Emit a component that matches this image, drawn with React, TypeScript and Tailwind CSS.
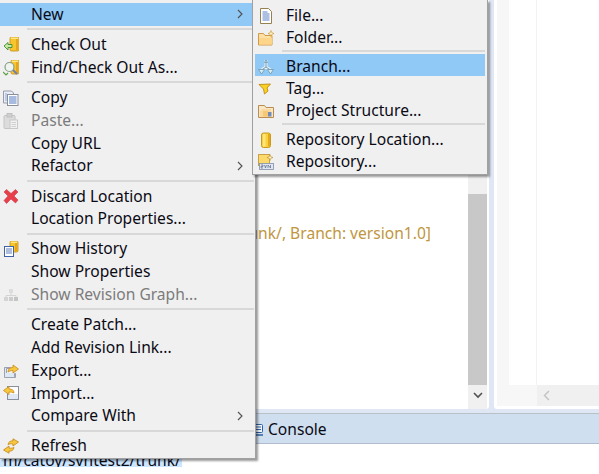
import type { ReactNode } from "react";

function Svg({ children }: { children: ReactNode }) {
  return (
    <svg width="16" height="16" viewBox="0 0 16 16" className="block">
      {children}
    </svg>
  );
}

const Cyl = ({ x = 7, w = 7, y = 1, h = 13 }: { x?: number; w?: number; y?: number; h?: number }) => (
  <>
    <rect x={x} y={y} width={w} height={h} rx="1.5" fill="#f7c62f" stroke="#c48a10" strokeWidth="0.8" />
    <rect x={x + w - 3} y={y + 1} width="2" height={h - 2} fill="#e6a51c" />
    <rect x={x + 0.8} y={y + 0.6} width={w - 1.6} height="1.4" fill="#ffe88a" />
  </>
);

const icons: Record<string, ReactNode> = {
  checkout: (
    <Svg>
      <Cyl x={7} w={9} y={0} h={14} />
      <path d="M1 9 5 5.500v2h4v3H5V13z" fill="#c8e8a8" stroke="#3f8f2c" strokeWidth="0.9" />
    </Svg>
  ),
  find: (
    <Svg>
      <Cyl x={8} w={8} y={0} h={14} />
      <circle cx="6.500" cy="7" r="4.500" fill="#eef4ee" stroke="#8a9a8a" strokeWidth="1.200" />
      <path d="m10 10 4 4" stroke="#6f7fb0" strokeWidth="2" />
      <path d="m0 12 3 3 2-2" stroke="#58a040" strokeWidth="1.200" fill="none" />
    </Svg>
  ),
  copy: (
    <Svg>
      <path d="M.5 1h8l2 2v10H.5z" fill="#e8eef8" stroke="#9a9aa8" />
      <rect x="4.500" y="4.500" width="10.500" height="11" fill="#fff" stroke="#8a8f9e" />
      <path d="M6 7h7.500M6 9h7.500M6 11h7.500M6 13h7.500" stroke="#4f78c0" />
      <path d="M2 4h2M2 6h2M2 8h2M2 10h2" stroke="#8fa8d8" />
    </Svg>
  ),
  paste: (
    <Svg>
      <rect x="1" y="2.500" width="11" height="13" rx="1" fill="#dcdcdc" stroke="#c4c4c4" />
      <rect x="4" y="0.500" width="5" height="3.500" fill="#cfcfcf" stroke="#c0c0c0" />
      <rect x="7" y="7" width="7.500" height="8.500" fill="#f2f2f2" stroke="#c8c8c8" />
      <path d="M8.500 9.500h4.500M8.500 11.500h4.500M8.500 13.500h4.500" stroke="#d0d0d0" />
    </Svg>
  ),
  discard: (
    <Svg>
      <path d="M3.500 1.500 8 5.500l4.500-4 2.500 2.500-4 4 4 4-2.500 3L8 11l-4.500 4.500L1 12.500l4-4.500-4-4z" fill="#e8404a" stroke="#c83a48" strokeWidth="0.600" />
    </Svg>
  ),
  history: (
    <Svg>
      <Cyl x={7} w={8} y={0} h={11} />
      <rect x="1.500" y="5.500" width="9" height="10" fill="#fff" stroke="#3f63a8" />
      <path d="M3 8h6M3 10h6M3 12h6" stroke="#5c7cb8" />
    </Svg>
  ),
  graph: (
    <Svg>
      <rect x="6" y="2" width="4" height="4" fill="#dcdcdc" />
      <path d="M8 6v2M3 10V8.500h10V10" stroke="#d4d4d4" fill="none" />
      <rect x="1" y="10" width="4" height="4" fill="#d4d4d4" />
      <rect x="6" y="10" width="4" height="4" fill="#cccccc" />
      <rect x="11" y="10" width="4" height="4" fill="#c4c4c4" />
    </Svg>
  ),
  export: (
    <Svg>
      <path d="M1.500 4.500h6v1h-4v8h8v-3h1v4h-11z" fill="#dfe8f5" stroke="#8a8f9e" strokeWidth="0.800" />
      <rect x="2.500" y="10" width="8.500" height="4" fill="#dfe8f5" />
      <path d="M5 9c0-3 2-4.500 5-4.500V2l5.500 4L10 10V7.500C8 7.500 6.500 8 5 9z" fill="#f7c83e" stroke="#c9891a" strokeWidth="0.800" />
    </Svg>
  ),
  import: (
    <Svg>
      <rect x="4.500" y="1.500" width="11" height="13" fill="#fff" stroke="#8a8f9e" />
      <rect x="5" y="9" width="10" height="5" fill="#dfe8f5" />
      <path d="M11 8c0-3-2-4-5-4V1.500L.5 5.500 6 9.500V7c2 0 3.500.2 5 1z" fill="#f7c83e" stroke="#c9891a" strokeWidth="0.800" />
    </Svg>
  ),
  refresh: (
    <Svg>
      <path d="M5 6.500c.5-3 3-4 5-3.500V.8L15.500 4 10 8V6C8 5.600 6.500 5.800 5 6.500z" fill="#f7c83e" stroke="#c48516" strokeWidth="0.800" />
      <path d="M11 9.500c-.5 3-3 4-5 3.500v2.200L.5 12 6 8v2c2 .4 3.500.2 5-.5z" fill="#f7c83e" stroke="#c48516" strokeWidth="0.800" />
    </Svg>
  ),
  file: (
    <Svg>
      <path d="M2.500.5h8l3 3v12h-11z" fill="#fff" stroke="#97814e" />
      <path d="M4.500 4h5M4.500 6h7M4.500 8h7M4.500 10h7M4.500 12h7" stroke="#5a80c8" />
    </Svg>
  ),
  folderNew: (
    <Svg>
      <path d="M.5 3.500h5l1.500 2h7v9.500H.5z" fill="#fde0a4" stroke="#d29a48" />
      <path d="M1 8h13v6.500H1z" fill="#fcd48a" />
      <path d="m13 .5.800 2.200L16 3.500l-2.200.8L13 6.500l-.8-2.200-2.200-.8 2.200-.8z" fill="#fff6c8" stroke="#c9922a" strokeWidth="0.600" />
    </Svg>
  ),
  branch: (
    <Svg>
      <path d="M8 1v7M8 8 3.500 11M8 8l4.500 3" stroke="#e8f2fa" strokeWidth="3" fill="none" />
      <path d="M8 1v7M8 8 3.500 11M8 8l4.500 3" stroke="#7a9cb0" strokeWidth="1" fill="none" />
      <path d="M.5 10.500h6L3.500 15zM9.500 10.500h6l-3 4.500z" fill="#d8ecf4" stroke="#6f96a8" strokeWidth="0.800" />
      <path d="M6.500 3.500 8 1l1.500 2.500z" fill="#d8ecf4" stroke="#6f96a8" strokeWidth="0.800" />
    </Svg>
  ),
  tag: (
    <Svg>
      <path d="M1 3.500 12.500 3 9 7l1 3-3.500 3L5.500 8z" fill="#f8d21c" stroke="#c08a18" strokeWidth="0.900" />
    </Svg>
  ),
  project: (
    <Svg>
      <path d="M.5 2.500h6l1.500 2h7.500v10H.5z" fill="#f8e8c8" stroke="#b98d4e" />
      <path d="M2 8l2-2h9v8H2z" fill="#fad9a0" />
      <rect x="5" y="8" width="5" height="5.500" fill="#f6c873" />
      <rect x="10" y="9" width="3.500" height="4.500" fill="#6f8db8" />
    </Svg>
  ),
  repo: (
    <Svg>
      <rect x="3.500" y="1" width="9" height="14.500" rx="2" fill="#fbd03d" stroke="#c89a1e" />
      <rect x="5" y="2" width="2.500" height="12.500" fill="#ffe680" />
      <rect x="10" y="2" width="2" height="12.500" fill="#e4a818" />
    </Svg>
  ),
  svn: (
    <Svg>
      <rect x="0.500" y="0.500" width="11" height="11" fill="#fbd96a" stroke="#c9a04a" />
      <path d="m12 .5.800 2.200 2.200.8-2.200.8-.8 2.200-.8-2.200-2.200-.8 2.200-.8z" fill="#fff6c8" stroke="#b88a2a" strokeWidth="0.600" />
      <rect x="1.500" y="9.500" width="14" height="6" fill="#dfe6f2" stroke="#7f8fa8" strokeWidth="0.800" />
      <path d="M3 11h2v1.500H3V14h2M6.500 11l1 3 1-3M10 14v-3l2.500 3v-3" stroke="#5a6a88" strokeWidth="0.700" fill="none" />
    </Svg>
  ),
};

const Chevron = () => (
  <svg width="6" height="10" viewBox="0 0 6 10" className="absolute right-[12px] top-1/2 -translate-y-1/2">
    <path d="m1 1 4 4-4 4" fill="none" stroke="#505050" strokeWidth="1.100" />
  </svg>
);

type Item = { label: string; icon?: string; sub?: boolean; off?: boolean; on?: boolean };

function Row({ item, h }: { item: Item; h: string }) {
  return (
    <div className={`relative flex items-center ${h} ${item.on ? "bg-[#90c8f6]" : ""}`}>
      <div className="w-[31px] shrink-0 pl-[3px]">{item.icon ? icons[item.icon] : null}</div>
      <span className={`whitespace-nowrap ${item.off ? "text-[#7c7c7c]" : "text-[#0a0a14]"}`}>{item.label}</span>
      {item.sub ? <Chevron /> : null}
    </div>
  );
}

const mainMenu: Item[][] = [
  [{ label: "New", sub: true, on: true }],
  [
    { label: "Check Out", icon: "checkout" },
    { label: "Find/Check Out As...", icon: "find" },
  ],
  [
    { label: "Copy", icon: "copy" },
    { label: "Paste...", icon: "paste", off: true },
    { label: "Copy URL" },
    { label: "Refactor", sub: true },
  ],
  [
    { label: "Discard Location", icon: "discard" },
    { label: "Location Properties..." },
  ],
  [
    { label: "Show History", icon: "history" },
    { label: "Show Properties" },
    { label: "Show Revision Graph...", icon: "graph", off: true },
  ],
  [
    { label: "Create Patch..." },
    { label: "Add Revision Link..." },
    { label: "Export...", icon: "export" },
    { label: "Import...", icon: "import" },
    { label: "Compare With", sub: true },
  ],
  [{ label: "Refresh", icon: "refresh" }],
];

const subMenu: Item[][] = [
  [
    { label: "File...", icon: "file" },
    { label: "Folder...", icon: "folderNew" },
  ],
  [
    { label: "Branch...", icon: "branch", on: true },
    { label: "Tag...", icon: "tag" },
    { label: "Project Structure...", icon: "project" },
  ],
  [
    { label: "Repository Location...", icon: "repo" },
    { label: "Repository...", icon: "svn" },
  ],
];

export default function App() {
  return (
    <div className="relative flex h-[474px] w-[599px] flex-col overflow-hidden bg-white font-['Noto_Sans',sans-serif] text-[15.600px] leading-none">
      {/* workbench behind the menus */}
      <div className="flex h-[413px] bg-[#dfe7f5] pb-[4px]">
        <div className="flex w-[489px] rounded-br-[3px] bg-white pr-[2px]">
          <div className="flex-1 overflow-hidden pt-[226px] text-right">
            <div className="whitespace-nowrap pr-[37px] text-[#c0963e]">/trunk/, Branch: version1.0]</div>
          </div>
          <div className="flex w-[19px] flex-col bg-[#f0f0f0]">
            <div className="h-[194px]" />
            <div className="h-[191px] bg-[#c8c8c8]" />
            <div className="flex flex-1 items-center justify-center pb-[3px]">
              <svg width="10" height="7" viewBox="0 0 10 7">
                <path d="m1 1 4 4 4-4" fill="none" stroke="#505050" strokeWidth="1.600" />
              </svg>
            </div>
          </div>
        </div>
        <div className="ml-[5px] flex flex-1 flex-col rounded-bl-[3px] bg-white pb-[3px] pl-[3px]">
          <div className="flex flex-1">
            <div className="w-[12px] bg-[#f7f7f7]" />
            <div className="w-[28px] border-r border-[#f2f2f2]" />
          </div>
          <div className="flex h-[21px]">
            <div className="w-[40px] bg-[#f7f7f7]" />
            <div className="flex flex-1 items-center bg-[#f0f0f0] pl-[6px]">
              <svg width="7" height="11" viewBox="0 0 7 11">
                <path d="M6 1 1.500 5.500 6 10" fill="none" stroke="#c4c4c4" strokeWidth="1.500" />
              </svg>
            </div>
          </div>
        </div>
      </div>
      <div className="flex h-[31px] items-center gap-[2px] border-t border-b border-t-[#b8c0c8] border-b-[#b0bccc] bg-[#cfdfef] pt-[2px] pl-[250px] text-[#0a0a14]">
        <svg width="16" height="16" viewBox="0 0 16 16">
          <rect x="3.500" y="2.500" width="9" height="8" rx="1" fill="#eef4fb" stroke="#2f5f9f" />
          <path d="M5 5h6M5 7.500h6" stroke="#2f5f9f" />
          <path d="M3 13h10" stroke="#2f5f9f" strokeWidth="1.500" />
        </svg>
        Console
      </div>
      <div className="bg-white pt-[3px]">
        <div className="flex h-[20px] w-[182px] items-center overflow-hidden whitespace-nowrap bg-[#cde6ff] pl-[3px] pt-[7px] text-[#0a0a14]">
          m/catoy/svntest2/trunk/
        </div>
      </div>

      {/* main context menu */}
      <div className="absolute left-0 top-0 w-[256px] border-r border-b border-[#a0a0a0] bg-[#f0f0f0] pt-[3px] pb-[1px] shadow-[2px_2px_2px_rgba(0,0,0,0.4)]">
        {mainMenu.map((group, i) => (
          <div key={i}>
            {i > 0 ? (
              <div className="flex h-[7.300px] items-center pl-[27px] pr-[1px]">
                <div className="h-[2px] w-full bg-[#d8d8d8]" />
              </div>
            ) : null}
            {group.map((item) => (
              <Row key={item.label} item={item} h="h-[22.800px] pt-[1px]" />
            ))}
          </div>
        ))}
      </div>

      {/* New submenu */}
      <div className="absolute left-[252px] top-0 w-[236px] border-r border-b border-l border-[#a0a0a0] bg-[#f0f0f0] px-[2px] pt-[3px] shadow-[2px_2px_2px_rgba(0,0,0,0.4)]">
        {subMenu.map((group, i) => (
          <div key={i}>
            {i > 0 ? (
              <div className="flex h-[7px] items-center pl-[27px]">
                <div className="h-[2px] w-full bg-[#d8d8d8]" />
              </div>
            ) : null}
            {group.map((item) => (
              <Row key={item.label} item={item} h="h-[22px] pt-[3px]" />
            ))}
          </div>
        ))}
        <div className="h-[3px]" />
      </div>
    </div>
  );
}
